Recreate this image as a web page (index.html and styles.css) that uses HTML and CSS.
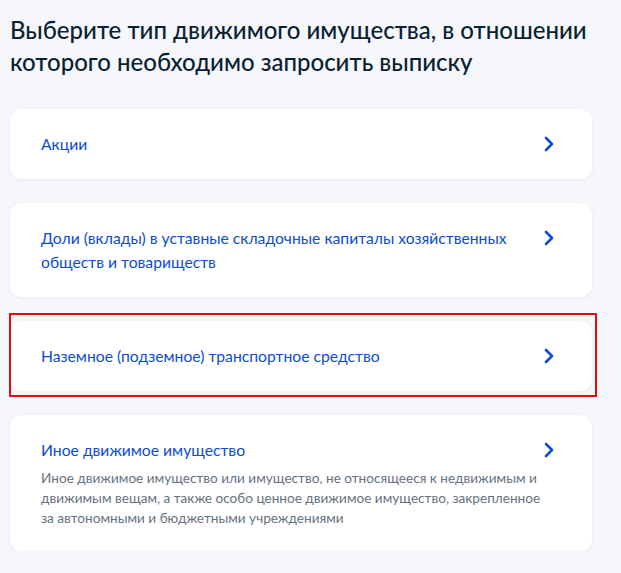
FILE: index.html
```html
<!DOCTYPE html>
<html>
	<head>
		<meta charset="UTF-8">
		<title>Выбор типа имущества</title>
		<link rel="stylesheet" href="styles.css">
	</head>
	<body>

<div class="wrap">
    <!--заголовок-->
    <h1 class="title">Выберите тип движимого имущества, в отношении которого необходимо запросить выписку</h1>

    <!--список вариантов-->
    <div class="list">
        <a href="javascript:;" class="card">
            <div class="card-name">Акции</div>
            <svg class="arrow" width="10" height="16" viewBox="0 0 10 16"><path d="M2 2 L8 8 L2 14" fill="none" stroke="#0d4cd3" stroke-width="2.6" stroke-linecap="round" stroke-linejoin="round"/></svg>
        </a>

        <a href="javascript:;" class="card">
            <div class="card-name">Доли (вклады) в уставные складочные капиталы хозяйственных обществ и товариществ</div>
            <svg class="arrow" width="10" height="16" viewBox="0 0 10 16"><path d="M2 2 L8 8 L2 14" fill="none" stroke="#0d4cd3" stroke-width="2.6" stroke-linecap="round" stroke-linejoin="round"/></svg>
        </a>

        <div class="marked">
            <a href="javascript:;" class="card">
                <div class="card-name">Наземное (подземное) транспортное средство</div>
                <svg class="arrow" width="10" height="16" viewBox="0 0 10 16"><path d="M2 2 L8 8 L2 14" fill="none" stroke="#0d4cd3" stroke-width="2.6" stroke-linecap="round" stroke-linejoin="round"/></svg>
            </a>
            <!--красная рамка выделения-->
            <div class="mark"></div>
        </div>

        <a href="javascript:;" class="card">
            <div class="card-name">Иное движимое имущество</div>
            <svg class="arrow" width="10" height="16" viewBox="0 0 10 16"><path d="M2 2 L8 8 L2 14" fill="none" stroke="#0d4cd3" stroke-width="2.6" stroke-linecap="round" stroke-linejoin="round"/></svg>
            <div class="card-desc">Иное движимое имущество или имущество, не относящееся к недвижимым и движимым вещам, а также особо ценное движимое имущество, закрепленное за автономными и бюджетными учреждениями</div>
        </a>
    </div>
</div>

</body>
</html>
```

FILE: styles.css
```css
* {
    padding: 0;
    margin: 0;
    box-sizing: border-box;
}

body {
    background-color: #f5f7fb;
    font-family: Lato, "Noto Sans", sans-serif;
    color: #0b1f33;
}

.wrap {
    width: 592px;
    padding: 14px 0 0 10px;
}

.title {
    font-size: 24px;
    font-weight: 500;
    line-height: 32px;
    color: #0b1f33;
    margin-bottom: 31px;
}

.list {
    display: flex;
    flex-direction: column;
    gap: 24px;
}

.card {
    display: grid;
    grid-template-columns: 1fr auto;
    column-gap: 24px;
    align-items: start;
    background: #fff;
    border-radius: 12px;
    box-shadow: 0 1px 4px rgba(11, 31, 51, 0.06);
    padding: 23px 38px 23px 31px;
    text-decoration: none;
}

.card-name {
    font-size: 15.7px;
    line-height: 24px;
    color: #0d4cd3;
}

.card-desc {
    grid-column: 1 / 3;
    margin-top: 6px;
    font-size: 13.6px;
    line-height: 20px;
    color: #66727f;
}

.arrow {
    margin-top: 4px;
}

.marked {
    position: relative;
}

.mark {
    position: absolute;
    top: -8px;
    left: -1px;
    right: -5px;
    bottom: -6px;
    border: 2px solid #e50914;
}
```
